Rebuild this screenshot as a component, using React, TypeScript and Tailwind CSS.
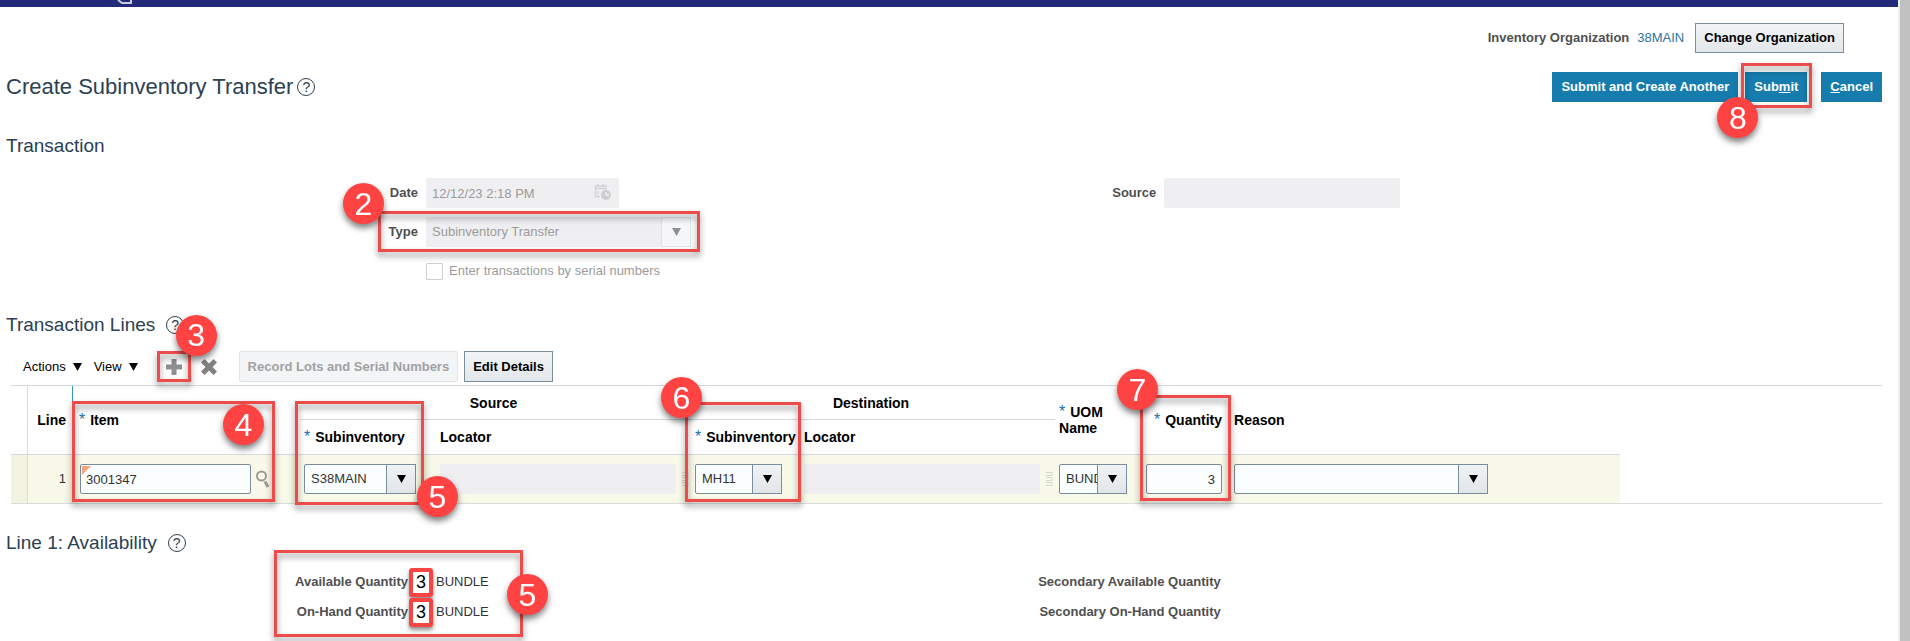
import type { ReactNode } from "react";
import clsx from "clsx";

function Highlight({ className }: { className: string }) {
  return (
    <span
      aria-hidden="true"
      className={clsx(
        "pointer-events-none absolute z-10 border-[3px] border-[#ee4b4b] drop-shadow-[0_4px_3px_rgba(0,0,0,0.45)]",
        className
      )}
    />
  );
}

function Step({ n, className }: { n: number; className: string }) {
  return (
    <span
      className={clsx(
        "pointer-events-none absolute z-20 flex size-[41px] items-center justify-center rounded-full bg-[#ff4343] text-[32px] font-normal leading-none text-white drop-shadow-[0_4px_3px_rgba(0,0,0,0.5)]",
        className
      )}
    >
      {n}
    </span>
  );
}

function HelpButton() {
  return (
    <button
      type="button"
      aria-label="Help"
      className="flex size-[18px] items-center justify-center rounded-full border border-[#2f4150] text-sm leading-none text-[#2f4150]"
    >
      ?
    </button>
  );
}

function SectionHeading({ children, help }: { children: ReactNode; help?: boolean }) {
  return (
    <div className="flex h-6 items-center gap-[11px] pl-[6px]">
      <h2 className="text-[19px] leading-6 text-[#2b4154]">{children}</h2>
      {help && <HelpButton />}
    </div>
  );
}

function Triangle() {
  return (
    <svg viewBox="0 0 9 8" className="h-2 w-[9px] fill-current" aria-hidden="true">
      <path d="M0 0h9L4.500 8z" />
    </svg>
  );
}

type SelectFieldProps = {
  id?: string;
  label?: string;
  value: string;
  className: string;
  disabled?: boolean;
};

function SelectField({ id, label, value, className, disabled }: SelectFieldProps) {
  return (
    <div className={clsx("relative h-[30px]", className)}>
      <select
        id={id}
        aria-label={label}
        disabled={disabled}
        defaultValue={value}
        className={clsx(
          "h-full w-full appearance-none rounded-[2px] pl-[6px] pr-[26px] text-[13px] opacity-100",
          disabled
            ? "bg-[#efeff1] text-[#9b9b9b]"
            : "border border-[#7b8c9c] bg-[#fbfefe] text-[#333]"
        )}
      >
        <option value={value}>{value}</option>
      </select>
      <span
        className={clsx(
          "pointer-events-none absolute inset-y-0 right-0 flex w-[30px] items-center justify-center border",
          disabled
            ? "border-[#dfe4e7] bg-[#f5f6f7] text-[#8f8f8f]"
            : "border-[#7b8c9c] bg-linear-to-b from-[#f0f3f5] to-[#e2e5e8] text-black"
        )}
      >
        <Triangle />
      </span>
    </div>
  );
}

function Required() {
  return <span className="mr-[5px] text-base leading-none font-normal text-[#1f6dad]">*</span>;
}

function DragHandle() {
  return (
    <svg viewBox="0 0 7 16" className="h-4 w-[7px] shrink-0" fill="none" stroke="#d5d8cf" aria-hidden="true">
      <path d="M0 1.5h6v3H0M0 6.5h6v3H0M0 11.5h6v3H0" />
    </svg>
  );
}

const primaryButton =
  "h-[30px] bg-[#167cae] px-[9px] text-[13px] font-bold text-white hover:bg-[#12688f]";
const plainButton =
  "border border-[#7b8c9c] bg-linear-to-b from-[#f2f4f6] to-[#e3e7ea] px-2 text-[13px] font-bold text-black";
const fieldLabel = "text-right text-[13px] font-bold text-[#4f4f4f]";
const cell = "border-b border-[#d9dde0] bg-[#f8f9e8] py-[9px] pl-1 pr-0";
const headCell = "border-b border-[#d3d9de] pl-1 pr-0 text-left align-middle font-bold";

export default function App() {
  return (
    <div className="flex min-h-screen overflow-hidden bg-white font-['Liberation_Sans',Arial,sans-serif] text-[13px] text-[#333]">
      <main className="min-w-0 flex-1">
        <div className="h-[7px] bg-[#232a7a]">
          <svg viewBox="0 0 18 4" className="ml-[117px] h-1 w-[18px]" fill="none" stroke="#c9cbe0" strokeWidth="2" aria-hidden="true">
            <path d="M1 0l4 3h9V0" />
          </svg>
        </div>

        <div className="flex items-center justify-end pt-4 pr-[54px]">
          <span className="font-bold text-[#4f4f4f]">Inventory Organization</span>
          <a href="#" className="ml-2 text-[#2c75a0]">38MAIN</a>
          <button type="button" className={clsx(plainButton, "ml-[11px] h-[30px]")}>
            Change Organization
          </button>
        </div>

        <header className="mt-[19px] flex items-center justify-between pr-4 pl-[6px]">
          <div className="flex items-center gap-1">
            <h1 className="text-[22px] leading-[30px] text-[#2b4154]">Create Subinventory Transfer</h1>
            <HelpButton />
          </div>
          <div className="flex">
            <button type="button" className={primaryButton}>Submit and Create Another</button>
            <div className="relative mr-[14px] ml-[7px]">
              <button type="button" className={primaryButton}>
                Sub<span className="underline">m</span>it
              </button>
              <Highlight className="-top-[9px] -right-[5px] -bottom-[6px] -left-1" />
              <Step n={8} className="top-[25px] -left-7" />
            </div>
            <button type="button" className={primaryButton}>
              <span className="underline">C</span>ancel
            </button>
          </div>
        </header>

        <section className="mt-8">
          <SectionHeading>Transaction</SectionHeading>
          <div className="mt-5 flex">
            <div className="w-[58.6%]">
              <div className="flex items-center gap-2">
                <label htmlFor="date" className={clsx(fieldLabel, "w-[418px]")}>Date</label>
                <div className="relative">
                  <input
                    id="date"
                    disabled
                    defaultValue="12/12/23 2:18 PM"
                    className="h-[30px] w-[193px] rounded-[2px] bg-[#efeff1] px-[6px] text-[#9b9b9b]"
                  />
                  <svg viewBox="0 0 18 18" className="absolute top-[5px] right-[7px] size-[18px]" aria-hidden="true">
                    <path d="M1 3h11v3M1.500 3v10.500H6M1 5.500h11M4 1v3M9 1v3M4 8v3" fill="none" stroke="#d3d3d5" strokeWidth="1.500" />
                    <circle cx="12" cy="12" r="5" fill="#cdcdcf" />
                    <path d="M12 9v3h3" fill="none" stroke="#efeff1" strokeWidth="1.500" />
                  </svg>
                </div>
              </div>
              <div className="mt-[9px] flex items-center gap-2">
                <label htmlFor="type" className={clsx(fieldLabel, "w-[418px]")}>Type</label>
                <div className="relative">
                  <SelectField id="type" value="Subinventory Transfer" className="w-[265px]" disabled />
                  <Highlight className="-top-[6px] -right-[9px] -bottom-[5px] -left-12" />
                  <Step n={2} className="-top-[34px] -left-[83px]" />
                </div>
              </div>
              <div className="mt-[15px] ml-[426px] flex h-[18px] items-center gap-[6px]">
                <input
                  id="serial"
                  type="checkbox"
                  disabled
                  className="size-[17px] appearance-none rounded-[1px] border border-[#cfcfcf] bg-white"
                />
                <label htmlFor="serial" className="text-[#9b9b9b]">Enter transactions by serial numbers</label>
              </div>
            </div>
            <div className="flex h-[30px] items-center gap-2">
              <label htmlFor="source" className={fieldLabel}>Source</label>
              <input id="source" disabled className="h-[30px] w-[236px] rounded-[2px] bg-[#efeff1] px-[6px]" />
            </div>
          </div>
        </section>

        <section className="mt-[33px]">
          <SectionHeading help>Transaction Lines</SectionHeading>
          <div className="mt-[14px] flex h-[31px] items-center pl-[23px] text-black">
            <button type="button" className="flex items-center gap-[7px]">
              Actions <Triangle />
            </button>
            <button type="button" className="ml-3 flex items-center gap-[7px]">
              View <Triangle />
            </button>
            <div className="relative ml-7">
              <button type="button" aria-label="Add row" className="block">
                <svg viewBox="0 0 16 16" className="size-4 fill-[#8d8f91]" aria-hidden="true">
                  <path d="M5.500 0h5v5.500H16v5h-5.500V16h-5v-5.500H0v-5h5.500z" />
                </svg>
              </button>
              <Highlight className="-top-2 -right-[9px] -bottom-[7px] -left-[9px]" />
              <Step n={3} className="-top-11 left-[10px]" />
            </div>
            <button type="button" aria-label="Delete row" className="ml-[19px]">
              <svg viewBox="0 0 16 16" className="size-4 fill-[#7f8183]" aria-hidden="true">
                <path d="M3.500 0L8 4.500 12.500 0 16 3.500 11.500 8 16 12.500 12.500 16 8 11.500 3.500 16 0 12.500 4.500 8 0 3.500z" />
              </svg>
            </button>
            <button
              type="button"
              disabled
              className="ml-[22px] h-[31px] rounded-[2px] border border-[#dfe3e5] bg-[#f3f4f5] px-2 font-bold text-[#a0a2a4]"
            >
              Record Lots and Serial Numbers
            </button>
            <button type="button" className={clsx(plainButton, "ml-[6px] h-[31px]")}>
              Edit Details
            </button>
          </div>

          <div className="mt-[3px] mr-4 ml-[11px] border-t border-[#d3d9de]">
            <table className="w-full table-fixed border-separate border-spacing-0">
              <colgroup>
                <col className="w-4" />
                <col className="w-[45px]" />
                <col className="w-[228px]" />
                <col className="w-[136px]" />
                <col className="w-[255px]" />
                <col className="w-[109px]" />
                <col className="w-[255px]" />
                <col className="w-[87px]" />
                <col className="w-[88px]" />
                <col className="w-[390px]" />
                <col />
              </colgroup>
              <thead className="text-sm leading-4 text-black">
                <tr className="h-[34px]">
                  <td rowSpan={2} className="border-b border-[#d3d9de]" />
                  <th rowSpan={2} className="border-b border-l border-[#d3d9de] pr-[6px] text-right">Line</th>
                  <th rowSpan={2} className="relative border-b border-l border-b-[#d3d9de] border-l-[#2e9ab5] pl-[6px] text-left">
                    <Required />Item
                    <Highlight className="top-[15px] -left-px h-[101px] w-[203px]" />
                    <Step n={4} className="top-[18px] left-[150px]" />
                  </th>
                  <th colSpan={2} className="border-b border-[#d3d9de] pr-1">Source</th>
                  <th colSpan={2} className="border-b border-[#d3d9de] pr-1">Destination</th>
                  <th rowSpan={2} className={headCell}>
                    <Required />UOM
                    <br />
                    Name
                  </th>
                  <th rowSpan={2} className={clsx(headCell, "relative")}>
                    <div className="pr-2 text-right">
                      <Required />Quantity
                    </div>
                    <Highlight className="top-[9px] -left-[2px] h-[106px] w-[91px]" />
                    <Step n={7} className="-top-[17px] -left-[25px]" />
                  </th>
                  <th rowSpan={2} className={headCell}>Reason</th>
                  <td rowSpan={2} />
                </tr>
                <tr className="h-[35px]">
                  <th className={clsx(headCell, "relative")}>
                    <Required />Subinventory
                    <Highlight className="-top-[19px] -left-[5px] h-[104px] w-[129px]" />
                    <Step n={5} className="top-14 left-[117px]" />
                  </th>
                  <th className={headCell}>Locator</th>
                  <th className={clsx(headCell, "relative whitespace-nowrap")}>
                    <Required />Subinventory
                    <Highlight className="-top-[18px] -left-[6px] h-[100px] w-[116px]" />
                    <Step n={6} className="-top-[43px] -left-[30px]" />
                  </th>
                  <th className={headCell}>Locator</th>
                </tr>
              </thead>
              <tbody>
                <tr>
                  <td className="border-b border-[#d9dde0] bg-[#f2f4e0]" />
                  <td className="border-b border-l border-[#d9dde0] bg-[#f8f9e8] pr-[6px] text-right">1</td>
                  <td className="border-b border-[#d9dde0] bg-[#f8f9e8] py-[9px] pl-2">
                    <div className="flex items-center gap-[5px]">
                      <div className="relative">
                        <input
                          aria-label="Item"
                          defaultValue="3001347"
                          className="block h-[30px] w-[171px] rounded-[2px] border border-[#7b8c9c] bg-[#fbfefe] px-[5px]"
                        />
                        <svg viewBox="0 0 9 9" className="absolute top-[2px] left-[2px] size-[9px] fill-[#f5a57d]" aria-hidden="true">
                          <path d="M0 0h9L0 9z" />
                        </svg>
                      </div>
                      <button type="button" aria-label="Search item">
                        <svg viewBox="0 0 14 18" className="h-[18px] w-[14px]" fill="none" stroke="#9b9b97" aria-hidden="true">
                          <circle cx="5.500" cy="6" r="4.500" strokeWidth="2" />
                          <path d="M9 11.500l3 5.500" strokeWidth="3" />
                        </svg>
                      </button>
                    </div>
                  </td>
                  <td className={cell}>
                    <SelectField label="Source subinventory" value="S38MAIN" className="w-28" />
                  </td>
                  <td className={cell}>
                    <div className="flex items-center gap-[6px]">
                      <input aria-label="Source locator" disabled className="h-[30px] w-[236px] rounded-[2px] bg-[#efeff1]" />
                      <DragHandle />
                    </div>
                  </td>
                  <td className={cell}>
                    <SelectField label="Destination subinventory" value="MH11" className="w-[87px]" />
                  </td>
                  <td className={cell}>
                    <div className="flex items-center gap-[6px]">
                      <input aria-label="Destination locator" disabled className="h-[30px] w-[236px] rounded-[2px] bg-[#efeff1]" />
                      <DragHandle />
                    </div>
                  </td>
                  <td className={cell}>
                    <SelectField label="UOM name" value="BUNDLE" className="w-[68px]" />
                  </td>
                  <td className={cell}>
                    <input
                      aria-label="Quantity"
                      defaultValue="3"
                      className="block h-[30px] w-[76px] rounded-[2px] border border-[#7b8c9c] bg-[#fbfefe] px-[6px] text-right"
                    />
                  </td>
                  <td className={cell}>
                    <SelectField label="Reason" value="" className="w-[254px]" />
                  </td>
                  <td className="border-b border-[#d9dde0]" />
                </tr>
              </tbody>
            </table>
          </div>
        </section>

        <section className="mt-[27px] pb-[14px]">
          <SectionHeading help>Line 1: Availability</SectionHeading>
          <div className="mt-3 flex">
            <dl className="relative w-[54.7%]">
              {["Available Quantity", "On-Hand Quantity"].map((name) => (
                <div key={name} className="flex h-[30px] items-center">
                  <dt className={clsx(fieldLabel, "w-[408px]")}>{name}</dt>
                  <dd className="flex items-center gap-[3px]">
                    <span className="ml-px flex h-[29px] w-6 items-center justify-center rounded-[3px] border-4 border-[#f94444] bg-white text-lg leading-none text-black shadow-[0_3px_4px_rgba(0,0,0,0.45)]">
                      3
                    </span>
                    BUNDLE
                  </dd>
                </div>
              ))}
              <Highlight className="-top-[17px] left-[274px] h-[87px] w-[249px]" />
              <Step n={5} className="top-[7px] left-[507px]" />
            </dl>
            <dl>
              {["Secondary Available Quantity", "Secondary On-Hand Quantity"].map((name) => (
                <div key={name}>
                  <dt className={clsx(fieldLabel, "leading-[30px]")}>{name}</dt>
                  <dd />
                </div>
              ))}
            </dl>
          </div>
        </section>
      </main>
      <div className="w-3 shrink-0 border-l-2 border-[#eeeeee] bg-[#c1c1c1]" />
    </div>
  );
}
